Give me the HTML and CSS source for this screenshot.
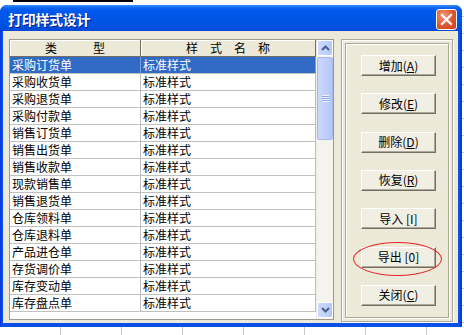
FILE: index.html
```html
<!DOCTYPE html>
<html lang="zh-CN">
<head>
    <meta charset="UTF-8">
    <title>打印样式设计</title>
    <link rel="stylesheet" href="styles.css">
</head>
<body>

<div class="top"><div class="cellmark"></div></div>

<div class="window">
    <div class="titlebar">
        <span class="title">打印样式设计</span>
        <div class="close">
            <svg width="13" height="13" viewBox="0 0 13 13"><path d="M2 2 L11 11 M11 2 L2 11" stroke="#fff" stroke-width="2.2" stroke-linecap="square"/></svg>
        </div>
    </div>

    <div class="client">
        <!-- list of bill types -->
        <div class="list">
            <div class="grid">
                <div class="row head">
                    <div class="c1">类　　　型</div>
                    <div class="c2">样　式　名　称</div>
                </div>
                <div class="row selected"><div class="c1">采购订货单</div><div class="c2">标准样式</div></div>
                <div class="row"><div class="c1">采购收货单</div><div class="c2">标准样式</div></div>
                <div class="row"><div class="c1">采购退货单</div><div class="c2">标准样式</div></div>
                <div class="row"><div class="c1">采购付款单</div><div class="c2">标准样式</div></div>
                <div class="row"><div class="c1">销售订货单</div><div class="c2">标准样式</div></div>
                <div class="row"><div class="c1">销售出货单</div><div class="c2">标准样式</div></div>
                <div class="row"><div class="c1">销售收款单</div><div class="c2">标准样式</div></div>
                <div class="row"><div class="c1">现款销售单</div><div class="c2">标准样式</div></div>
                <div class="row"><div class="c1">销售退货单</div><div class="c2">标准样式</div></div>
                <div class="row"><div class="c1">仓库领料单</div><div class="c2">标准样式</div></div>
                <div class="row"><div class="c1">仓库退料单</div><div class="c2">标准样式</div></div>
                <div class="row"><div class="c1">产品进仓单</div><div class="c2">标准样式</div></div>
                <div class="row"><div class="c1">存货调价单</div><div class="c2">标准样式</div></div>
                <div class="row"><div class="c1">库存变动单</div><div class="c2">标准样式</div></div>
                <div class="row"><div class="c1">库存盘点单</div><div class="c2">标准样式</div></div>
            </div>
            <div class="vscroll">
                <div class="sbtn">
                    <svg width="9" height="6" viewBox="0 0 9 6"><path d="M1 5 L4.5 1.5 L8 5" fill="none" stroke="#4d6185" stroke-width="2"/></svg>
                </div>
                <div class="thumb"><div class="grip"></div></div>
                <div class="track"></div>
                <div class="sbtn">
                    <svg width="9" height="6" viewBox="0 0 9 6"><path d="M1 1 L4.5 4.5 L8 1" fill="none" stroke="#4d6185" stroke-width="2"/></svg>
                </div>
            </div>
        </div>

        <!-- command buttons -->
        <div class="frame">
            <div class="inner">
                <button>增加(<u>A</u>)</button>
                <button>修改(<u>E</u>)</button>
                <button>删除(<u>D</u>)</button>
                <button>恢复(<u>R</u>)</button>
                <button>导入 [I]</button>
                <div class="marked">
                    <button>导出 [0]</button>
                    <div class="ring"></div>
                </div>
                <button>关闭(<u>C</u>)</button>
            </div>
        </div>
    </div>
</div>

</body>
</html>
```

FILE: styles.css
```css
* {
    margin: 0;
    padding: 0;
    box-sizing: border-box;
}
body {
    width: 464px;
    height: 335px;
    overflow: hidden;
    font-family: "Noto Sans CJK SC", sans-serif;
    font-size: 12px;
    color: #000;
    background-color: #fff;
    background-image:
        repeating-linear-gradient(to right, transparent 0 60px, #c8c8c8 60px 61px),
        repeating-linear-gradient(to bottom, transparent 0 16px, #c8c8c8 16px 17px);
}
.top {
    height: 5px;
    background-color: #fff;
    padding-left: 13px;
}
.cellmark {
    width: 120px;
    height: 2px;
    background-color: #000;
}
.window {
    width: 462px;
    height: 322px;
    background: linear-gradient(to right, #0831d9, #0a50e6 2px, #0a50e6 459px, #0831d9);
    border-radius: 7px 7px 0 0;
    display: flex;
    flex-direction: column;
}
.titlebar {
    height: 26px;
    border-radius: 7px 7px 0 0;
    background: linear-gradient(#3d8ef8 0, #0a63ef 3px, #0058ee 6px, #0055e5 55%, #0050df 85%, #0348d6 100%);
    display: flex;
    align-items: center;
    justify-content: space-between;
    padding: 0 5px 0 8px;
}
.title {
    color: #fff;
    font-weight: bold;
    font-size: 14px;
    letter-spacing: -0.3px;
    text-shadow: 1px 1px #0a1a8a;
    margin-top: 1px;
}
.close {
    width: 21px;
    height: 21px;
    margin-top: 2px;
    border: 1px solid #fff;
    border-radius: 3px;
    background: radial-gradient(circle at 35% 30%, #f09a7c, #e0532e 55%, #c8401c);
    display: flex;
    align-items: center;
    justify-content: center;
}
.client {
    flex: 1;
    margin: 0 4px 4px 3px;
    background-color: #ece9d8;
    display: flex;
    align-items: flex-start;
    padding: 8px 5px 0 6px;
    gap: 7px;
}
.list {
    width: 325px;
    height: 281px;
    border: 1px solid #9c9a8f;
    background-color: #fff;
    display: flex;
}
.grid {
    width: 306px;
    display: flex;
    flex-direction: column;
}
.row {
    display: flex;
    height: 17px;
    line-height: 16px;
}
.row div {
    border-right: 1px solid #c0c0c0;
    border-bottom: 1px solid #c0c0c0;
    padding-left: 2px;
    white-space: pre;
    overflow: hidden;
}
.c1 {
    width: 131px;
}
.c2 {
    width: 175px;
}
.row.head div {
    background-color: #ece9d8;
    border-right-color: #716f64;
    border-bottom-color: #716f64;
    box-shadow: inset 1px 1px #fff;
    text-align: center;
    padding-left: 0;
}
.row.selected div {
    background-color: #316ac5;
    color: #fff;
    border-right-color: #7f9ed6;
}
.vscroll {
    width: 17px;
    background-color: #f4f3ee;
    border-left: 1px solid #eeede5;
    display: flex;
    flex-direction: column;
    padding: 0 0 1px 0;
}
.sbtn {
    height: 16px;
    border: 1px solid #fff;
    border-radius: 2px;
    background: linear-gradient(to right, #cdd9fc, #c2d3fc 50%, #b4c8f6);
    display: flex;
    align-items: center;
    justify-content: center;
}
.thumb {
    height: 83px;
    margin-top: 1px;
    border: 1px solid #a6b8ee;
    border-radius: 2px;
    background: linear-gradient(to right, #c9d8fd, #bfd1fb 50%, #b3c7f5);
    display: flex;
    align-items: center;
    justify-content: center;
}
.grip {
    width: 7px;
    height: 7px;
    background: repeating-linear-gradient(to bottom, #eef3ff 0 1px, #8ca5e4 1px 2px);
}
.track {
    flex: 1;
}
.frame {
    width: 112px;
    height: 283px;
    border: 1px solid #aca899;
    box-shadow: inset 1px 1px #fff, 1px 1px #fff;
    padding: 3px;
}
.inner {
    height: 100%;
    border: 1px solid #aca899;
    box-shadow: inset 1px 1px #fff, 1px 1px #fff;
    display: flex;
    flex-direction: column;
    align-items: center;
    gap: 17.33px;
    padding: 11px 0 0 3px;
}
button {
    width: 75px;
    height: 21px;
    font-family: "Noto Sans CJK SC", sans-serif;
    font-size: 12px;
    line-height: 18px;
    color: #000;
    background-color: #f1efe4;
    border: 1px solid;
    border-color: #fff #716f64 #716f64 #fff;
    box-shadow: inset -1px -1px #aca899;
    padding: 0;
}
button u {
    text-underline-offset: 1px;
}
.marked {
    position: relative;
    height: 21px;
}
.ring {
    position: absolute;
    left: -8px;
    top: -5px;
    width: 89px;
    height: 34px;
    border: 1px solid #e4282c;
    border-radius: 50%;
}
```
